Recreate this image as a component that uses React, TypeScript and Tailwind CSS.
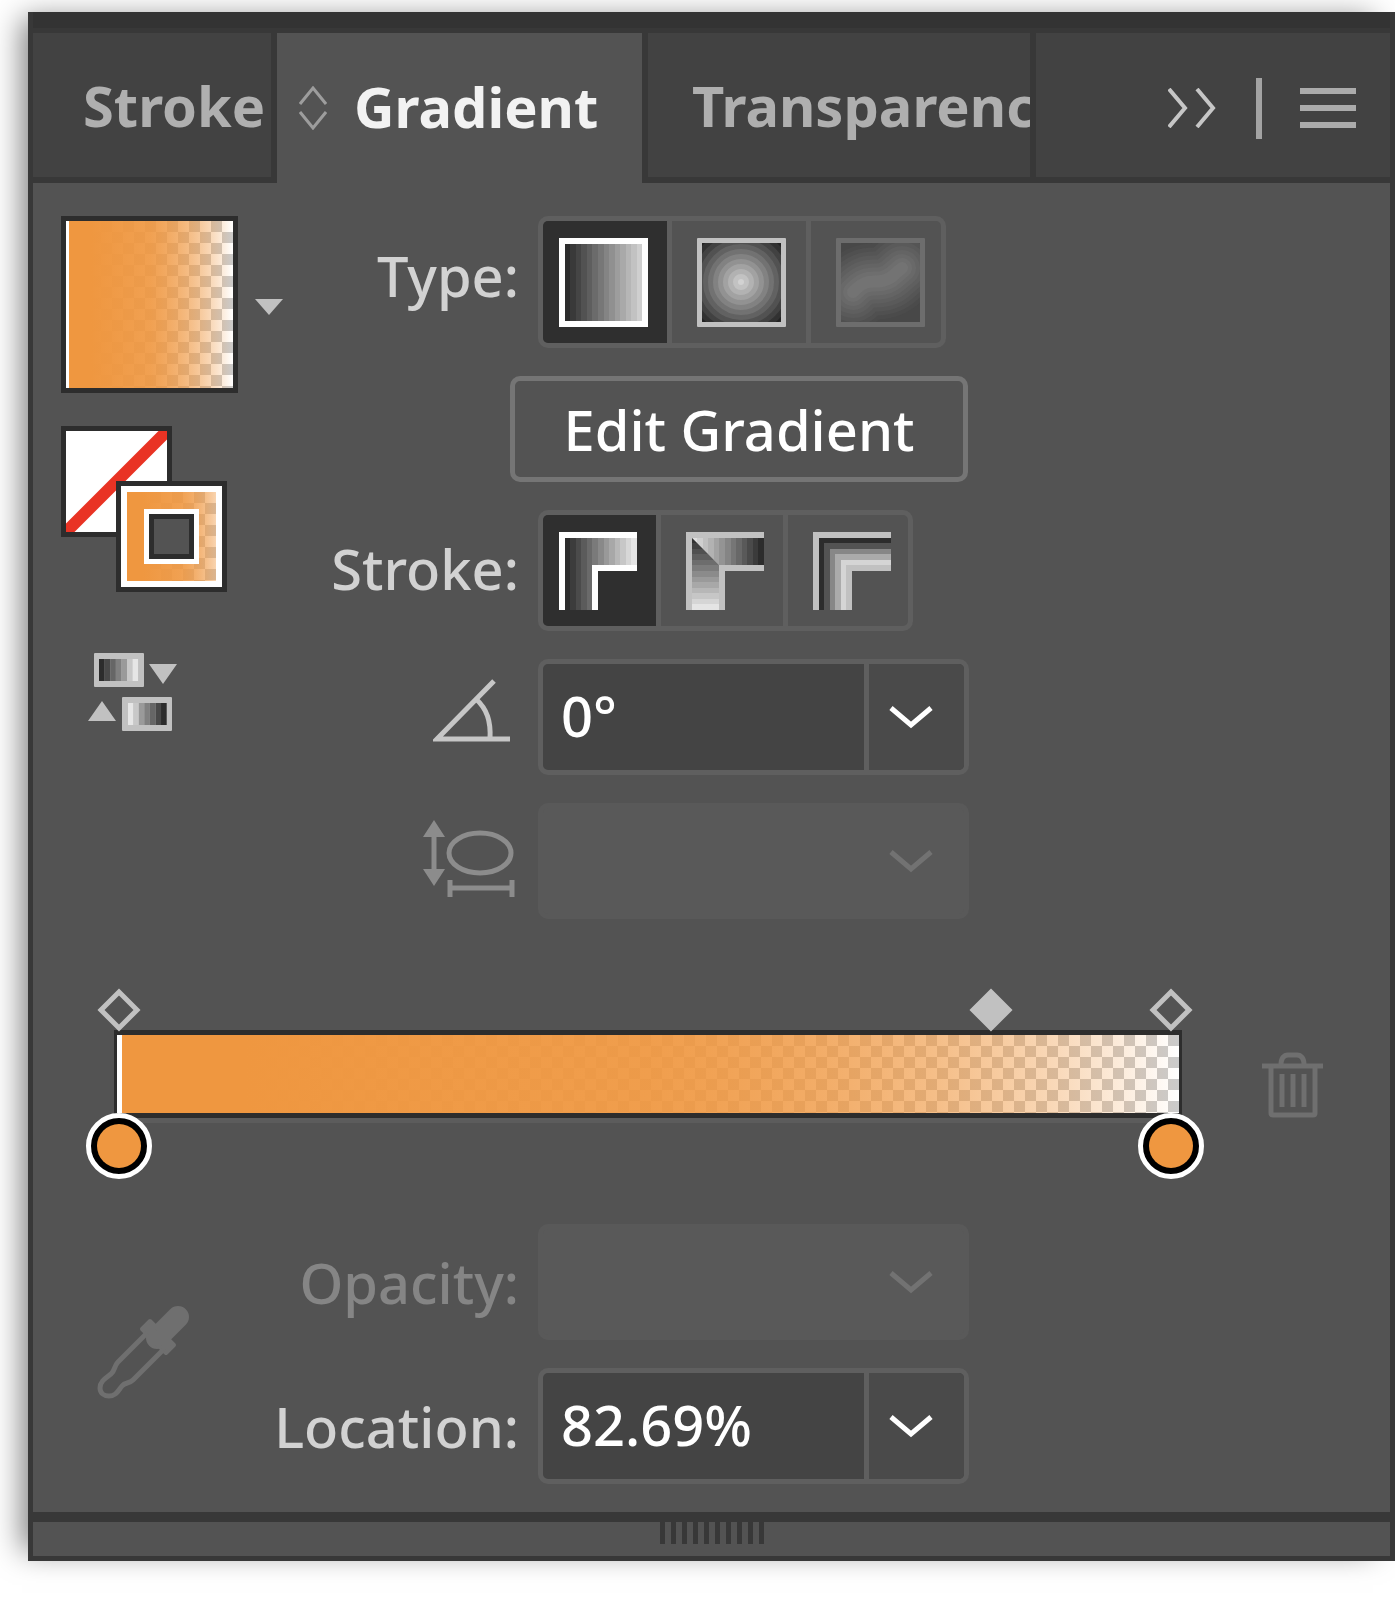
import type { ReactNode } from "react";

const CHECKER = "bg-[position:0_0,100%_0]";

const ORANGE_FADE =
  "bg-[image:linear-gradient(to_right,#ef9740_15%,81%,#ef974000),conic-gradient(#fff_25%,#cbcbcb_0_50%,#fff_0_75%,#cbcbcb_0)]";
const ORANGE_FADE_BAR =
  "bg-[image:linear-gradient(to_right,#ef9740_12%,83%,#ef974000),conic-gradient(#cbcbcb_25%,#fff_0_50%,#cbcbcb_0_75%,#fff_0)]";

function grey(v: number) {
  const c = Math.round(v);
  return `rgb(${c},${c},${c})`;
}

/* ---------- icons ---------- */

function SortIcon() {
  return (
    <svg width="28" height="44" viewBox="0 0 28 44" fill="none" stroke="#9d9d9d" strokeWidth="3" aria-hidden="true">
      <path d="M1 18 14 2l13 16M1 26l13 16 13-16" />
    </svg>
  );
}

function DoubleChevron() {
  return (
    <svg width="48" height="40" viewBox="0 0 48 40" fill="none" stroke="#c6c6c6" strokeWidth="4" aria-hidden="true">
      <path d="M1 1l16 19L1 39M29 1l16 19-16 19" />
    </svg>
  );
}

function MenuIcon() {
  return (
    <svg width="56" height="40" viewBox="0 0 56 40" fill="#ababab" aria-hidden="true">
      <path d="M0 0h56v6H0zM0 17h56v6H0zM0 34h56v6H0z" />
    </svg>
  );
}

function ChevronDown() {
  return (
    <svg width="44" height="24" viewBox="0 0 44 24" fill="none" stroke="currentColor" strokeWidth="5" aria-hidden="true">
      <path d="M2 3l20 17L42 3" />
    </svg>
  );
}

function LinearIcon() {
  return (
    <svg width="89" height="89" viewBox="0 0 16 16" shapeRendering="crispEdges" aria-hidden="true">
      <rect width="16" height="16" fill="#fff" />
      {Array.from({ length: 14 }, (_, i) => (
        <rect key={i} x={1 + i} y="1" width={14 - i} height="14" fill={grey(44 + i * 12.5)} />
      ))}
    </svg>
  );
}

function RadialIcon() {
  return (
    <svg width="89" height="89" viewBox="0 0 89 89" aria-hidden="true">
      <defs>
        <clipPath id="radial-clip">
          <rect x="5" y="5" width="79" height="79" />
        </clipPath>
      </defs>
      <rect width="89" height="89" rx="1" fill="#c1c1c1" />
      <g clipPath="url(#radial-clip)">
        <rect x="5" y="5" width="79" height="79" fill="#2c2c2c" />
        {Array.from({ length: 11 }, (_, i) => (
          <circle key={i} cx="44" cy="44" r={54 - i * 5} fill={grey(50 + i * 16)} stroke={grey(34 + i * 16)} strokeWidth="2" />
        ))}
      </g>
    </svg>
  );
}

function FreeformIcon() {
  return (
    <svg width="89" height="89" viewBox="0 0 89 89" aria-hidden="true">
      <defs>
        <clipPath id="freeform-clip">
          <rect x="5" y="5" width="79" height="79" />
        </clipPath>
      </defs>
      <rect width="89" height="89" rx="1" fill="#6d6d6d" />
      <g clipPath="url(#freeform-clip)">
        <rect x="5" y="5" width="79" height="79" fill="#484848" />
        {Array.from({ length: 9 }, (_, i) => (
          <path
            key={i}
            d="M17 54C30 40 36 45 46 43C56 41 58 36 66 30"
            fill="none"
            strokeLinecap="round"
            stroke={grey(75 + i * 5)}
            strokeWidth={76 - i * 8}
          />
        ))}
      </g>
    </svg>
  );
}

function StrokeWithinIcon() {
  return (
    <svg width="78" height="78" viewBox="0 0 14 14" shapeRendering="crispEdges" aria-hidden="true">
      <path d="M0 0H14V7H7V14H0z" fill="#fff" />
      {Array.from({ length: 13 }, (_, i) => (
        <rect key={i} x={1 + i} y="1" width="1" height={i < 5 ? 13 : 5} fill={grey(44 + i * 15.5)} />
      ))}
    </svg>
  );
}

function StrokeAlongIcon() {
  return (
    <svg width="78" height="78" viewBox="0 0 14 14" shapeRendering="crispEdges" aria-hidden="true">
      <defs>
        <clipPath id="along-arm">
          <path d="M1 1H14V6H6z" />
        </clipPath>
        <clipPath id="along-leg">
          <path d="M1 1L6 6V14H1z" />
        </clipPath>
      </defs>
      <path d="M0 0H14V7H7V14H0z" fill="#c1c1c1" />
      <g clipPath="url(#along-arm)">
        {Array.from({ length: 13 }, (_, i) => (
          <rect key={i} x={1 + i} y="1" width="1" height="5" fill={grey(222 - i * 14.8)} />
        ))}
      </g>
      <g clipPath="url(#along-leg)">
        {Array.from({ length: 13 }, (_, i) => (
          <rect key={i} x="1" y={1 + i} width="5" height="1" fill={grey(50 + i * 14.8)} />
        ))}
      </g>
    </svg>
  );
}

function StrokeAcrossIcon() {
  const bands = ["#c1c1c1", "#2c2c2c", "#535353", "#878787", "#ababab", "#d5d5d5", "#c1c1c1"];
  return (
    <svg width="78" height="78" viewBox="0 0 14 14" shapeRendering="crispEdges" aria-hidden="true">
      {bands.map((c, i) => (
        <path key={i} d={`M${i} 14V${i}H14V${i + 1}H${i + 1}V14z`} fill={c} />
      ))}
    </svg>
  );
}

function AngleIcon() {
  return (
    <svg width="78" height="64" viewBox="0 0 78 64" fill="none" stroke="#c6c6c6" strokeWidth="5" aria-hidden="true">
      <path d="M77 60H4L61 2" />
      <path d="M43 20C54 30 58 42 57 60" />
    </svg>
  );
}

function AspectIcon() {
  return (
    <svg width="92" height="78" viewBox="0 0 92 78" fill="none" stroke="#8c8c8c" strokeWidth="5" aria-hidden="true">
      <path d="M11 14V54" />
      <path d="M11 0l11 17H0zM11 66l11-17H0z" fill="#8c8c8c" stroke="none" />
      <ellipse cx="57" cy="33" rx="31" ry="20" />
      <path d="M27 60v17M89 60v17M27 68H89" />
    </svg>
  );
}

function SwapGradientIcon() {
  const tones = ["#2c2c2c", "#484848", "#666", "#808080", "#9a9a9a", "#c8c8c8", "#e6e6e6", "#c1c1c1"];
  return (
    <svg width="89" height="78" viewBox="0 0 89 78" fill="#c1c1c1" aria-hidden="true">
      <rect x="6" y="0" width="50" height="34" rx="1" />
      <rect x="34" y="44" width="50" height="34" rx="1" />
      {tones.map((c, i) => (
        <g key={i} fill={c}>
          <rect x={11 + i * 5.6} y="6" width={i < 7 ? 5.7 : 1} height="22" />
          <rect x={i < 7 ? 73 - i * 5.6 : 39} y="50" width={i < 7 ? 5.7 : 1} height="22" />
        </g>
      ))}
      <path d="M61 11h28L75 31zM0 68h28L14 48z" />
    </svg>
  );
}

function TrashIcon() {
  return (
    <svg width="61" height="66" viewBox="0 0 61 66" fill="none" stroke="#6f6f6f" strokeWidth="5" aria-hidden="true">
      <path d="M0 14H61" />
      <path d="M19 13C19 6 22 3 26 3h9c4 0 7 3 7 10" />
      <path d="M9 14V61q0 2 2 2H51q2 0 2-2V14" />
      <path d="M20 22V55M31 22V55M42 22V55" />
    </svg>
  );
}

function EyedropperIcon() {
  return (
    <svg width="92" height="93" viewBox="0 0 92 93" fill="none" stroke="#6f6f6f" strokeLinejoin="round" aria-hidden="true">
      <path d="M81 11L60 32" strokeWidth="22" strokeLinecap="round" />
      <path d="M53 15L77 39 69 47 45 23z" fill="#6f6f6f" strokeWidth="4" />
      <path d="M50 27L21 56C17 60 18 65 14 68C9 72 3 75 3 82C3 87 7 90 12 90C19 90 21 85 25 80C28 76 32 78 36 74L66 44" strokeWidth="5" />
    </svg>
  );
}

/* ---------- controls ---------- */

function Tool({ label, active, disabled, className, children }: { label: string; active?: boolean; disabled?: boolean; className: string; children: ReactNode }) {
  return (
    <button
      type="button"
      aria-label={label}
      aria-pressed={!!active}
      disabled={disabled}
      className={`flex items-center justify-start border-[#5f5f5f] not-first:border-l-[5px] ${active ? "bg-[#2f2f2f]" : ""} ${className}`}
    >
      {children}
    </button>
  );
}

function Combo({ id, name, value, disabled }: { id: string; name: string; value?: string; disabled?: boolean }) {
  return (
    <div
      className={`flex h-[116px] w-[431px] overflow-hidden rounded-[10px] border-[5px] ${
        disabled ? "border-[#595959] bg-[#595959]" : "border-[#5f5f5f] bg-[#444444]"
      }`}
    >
      <input
        id={id}
        type="text"
        aria-label={name}
        defaultValue={value}
        disabled={disabled}
        className="min-w-0 flex-1 bg-transparent pb-1 pl-[18px] font-medium text-white outline-none"
      />
      <button
        type="button"
        aria-label={`${name} options`}
        disabled={disabled}
        className={`flex w-[100px] items-center justify-center border-l-[5px] pr-3 ${
          disabled ? "border-[#595959] text-[#727272]" : "border-[#5f5f5f] bg-[#4a4a4a] text-white"
        }`}
      >
        <ChevronDown />
      </button>
    </div>
  );
}

const LABEL = "flex items-center justify-end font-medium";

function Diamond({ at, filled }: { at: string; filled?: boolean }) {
  return (
    <button type="button" aria-label={filled ? "Midpoint" : "Stop marker"} className="absolute top-0 -translate-x-1/2" style={{ left: at }}>
      <svg width="44" height="44" viewBox="0 0 44 44" fill={filled ? "#c1c1c1" : "none"} stroke="#c1c1c1" strokeWidth="5" className="block" aria-hidden="true">
        <path d="M22 4L40 22 22 40 4 22z" />
      </svg>
    </button>
  );
}

function ColorStop({ at }: { at: string }) {
  return (
    <button
      type="button"
      aria-label="Colour stop"
      className="absolute top-[125px] size-[66px] -translate-x-1/2 rounded-full border-[5px] border-white bg-black p-[6px]"
      style={{ left: at }}
    >
      <span className="block size-full rounded-full bg-[#ef9740]" />
    </button>
  );
}

export default function App() {
  return (
    <main className="overflow-hidden bg-white pt-3 pb-[39px] pl-7 font-['Noto_Sans',sans-serif] text-[56px] leading-none text-[#d2d2d2]">
      <section className="border-x-[5px] border-b-[5px] border-[#383838] bg-[#535353] shadow-[-14px_-2px_28px_-8px_rgba(0,0,0,0.5)]">
        <div className="h-[21px] border-b-[5px] border-[#383838] bg-[#333333]" />

        <header className="flex h-[150px]">
          <div role="tablist" className="flex flex-none">
            <button type="button" role="tab" aria-selected={false} className="w-[244px] overflow-hidden border-r-[6px] border-b-[6px] border-[#383838] bg-[#424242] pl-[50px] text-left font-bold whitespace-nowrap text-[#afafaf]">
              Stroke
            </button>
            <button type="button" role="tab" aria-selected className="flex w-[365px] items-center gap-[27px] bg-[#535353] pb-1 pl-[22px] font-bold text-[#f2f2f2]">
              <span className="pt-1">
                <SortIcon />
              </span>
              Gradient
            </button>
            <button type="button" role="tab" aria-selected={false} className="w-[394px] overflow-hidden border-x-[6px] border-b-[6px] border-[#383838] bg-[#424242] pl-[44px] text-left font-bold whitespace-nowrap text-[#afafaf]">
              Transparency
            </button>
          </div>
          <div className="flex flex-1 items-center justify-end border-b-[6px] border-[#383838] bg-[#424242] pt-[6px] pr-[34px]">
            <button type="button" aria-label="Collapse panel">
              <DoubleChevron />
            </button>
            <span className="mr-[38px] ml-10 h-[61px] w-[6px] bg-[#a3a3a3]" />
            <button type="button" aria-label="Panel menu">
              <MenuIcon />
            </button>
          </div>
        </header>

        <div className="flex pt-[33px] pl-7">
          <div className="w-[222px] flex-none">
            <div className="flex items-center gap-[17px]">
              <button type="button" aria-label="Gradient preview" className="size-[177px] flex-none border-[5px] border-[#2d2d2d]">
                <span className={`block size-full border-l-[3px] border-white bg-[length:100%_100%,22px_22px] bg-origin-border ${CHECKER} ${ORANGE_FADE}`} />
              </button>
              <button type="button" aria-label="Gradient presets" className="pt-[5px]">
                <svg width="28" height="16" viewBox="0 0 28 16" fill="#c1c1c1" className="block" aria-hidden="true">
                  <path d="M0 0h28L14 16z" />
                </svg>
              </button>
            </div>

            <div className="relative mt-[33px] size-[166px]">
              <button type="button" aria-label="Fill: none" className="block size-[111px] border-[5px] border-[#2d2d2d] bg-white">
                <svg viewBox="0 0 101 101" className="block size-full" aria-hidden="true">
                  <path d="M-4 105L105 -4" stroke="#e93324" strokeWidth="12" />
                </svg>
              </button>
              <button type="button" aria-label="Stroke: gradient" className="absolute right-0 bottom-0 size-[111px] border-[5px] border-[#2d2d2d] bg-white p-[6px]">
                <span className={`flex size-full items-center justify-center bg-[length:118%_100%,22px_22px] ${CHECKER} ${ORANGE_FADE}`}>
                  <span className="size-[55px] border-[5px] border-white bg-[#2d2d2d] p-[5px]">
                    <span className="block size-full bg-[#535353]" />
                  </span>
                </span>
              </button>
            </div>

            <button type="button" aria-label="Reverse gradient" className="mt-[61px] ml-[27px] block">
              <SwapGradientIcon />
            </button>
          </div>

          <div className="flex flex-col gap-7">
            <div className="flex gap-[19px]">
              <div className={`${LABEL} w-[236px] pb-[14px]`}>Type:</div>
              <div role="group" aria-label="Type" className="flex h-[132px] overflow-hidden rounded-[10px] border-[5px] border-[#5f5f5f]">
                <Tool label="Linear gradient" active className="w-[124px] pl-4">
                  <LinearIcon />
                </Tool>
                <Tool label="Radial gradient" className="w-[139px] pl-[25px]">
                  <RadialIcon />
                </Tool>
                <Tool label="Freeform gradient" disabled className="w-[135px] pl-[25px]">
                  <FreeformIcon />
                </Tool>
              </div>
            </div>

            <button type="button" className="ml-[227px] h-[106px] w-[458px] rounded-[10px] border-[5px] border-[#757575] font-medium text-white">
              Edit Gradient
            </button>

            <div className="flex gap-[19px]">
              <div className={`${LABEL} w-[236px] pb-[6px]`}>Stroke:</div>
              <div role="group" aria-label="Stroke" className="flex h-[121px] overflow-hidden rounded-[10px] border-[5px] border-[#5f5f5f]">
                <Tool label="Apply gradient within stroke" active className="w-[113px] pl-4">
                  <StrokeWithinIcon />
                </Tool>
                <Tool label="Apply gradient along stroke" className="w-[127px] pl-[25px]">
                  <StrokeAlongIcon />
                </Tool>
                <Tool label="Apply gradient across stroke" className="w-[125px] pl-[25px]">
                  <StrokeAcrossIcon />
                </Tool>
              </div>
            </div>

            <div className="flex gap-[19px]">
              <label htmlFor="angle" className={`${LABEL} w-[236px] pr-2 pb-3`}>
                <AngleIcon />
              </label>
              <Combo id="angle" name="Angle" value="0°" />
            </div>

            <div className="flex gap-[19px]">
              <label htmlFor="aspect" className={`${LABEL} w-[236px] pr-1 pb-1`}>
                <AspectIcon />
              </label>
              <Combo id="aspect" name="Aspect ratio" disabled />
            </div>
          </div>
        </div>

        <div className="mt-[69px] flex pr-[67px] pl-[81px]">
          <div className="relative h-[192px] flex-1 pt-[42px]">
            <div className="h-[88px] border-x-[3px] border-y-[5px] border-[#2d2d2d] shadow-[0_5px_0_#5c5c5c]">
              <div className={`size-full border-l-[5px] border-white bg-[length:100%_100%,22px_22px] bg-origin-border ${CHECKER} ${ORANGE_FADE_BAR}`} />
            </div>
            <div className="absolute inset-y-0 right-[11px] left-[5px]">
              <Diamond at="0%" />
              <Diamond at="82.9%" filled />
              <Diamond at="100%" />
              <ColorStop at="0%" />
              <ColorStop at="100%" />
            </div>
          </div>
          <button type="button" aria-label="Delete stop" disabled className="mt-16 ml-20 self-start">
            <TrashIcon />
          </button>
        </div>

        <div className="flex pt-11 pb-7 pl-16">
          <button type="button" aria-label="Pick colour" disabled className="mt-[82px] self-start">
            <EyedropperIcon />
          </button>
          <div className="flex flex-col gap-7">
            <div className="flex gap-[19px]">
              <label htmlFor="opacity" className={`${LABEL} w-[330px] text-[#858585]`}>
                Opacity:
              </label>
              <Combo id="opacity" name="Opacity" disabled />
            </div>
            <div className="flex gap-[19px]">
              <label htmlFor="location" className={`${LABEL} w-[330px]`}>
                Location:
              </label>
              <Combo id="location" name="Location" value="82.69%" />
            </div>
          </div>
        </div>

        <footer className="flex h-11 justify-center gap-[6px] border-t-[10px] border-[#383838]">
          {Array.from({ length: 10 }, (_, i) => (
            <span key={i} className="h-[22px] w-[5px] bg-[#383838]" />
          ))}
        </footer>
      </section>
    </main>
  );
}
